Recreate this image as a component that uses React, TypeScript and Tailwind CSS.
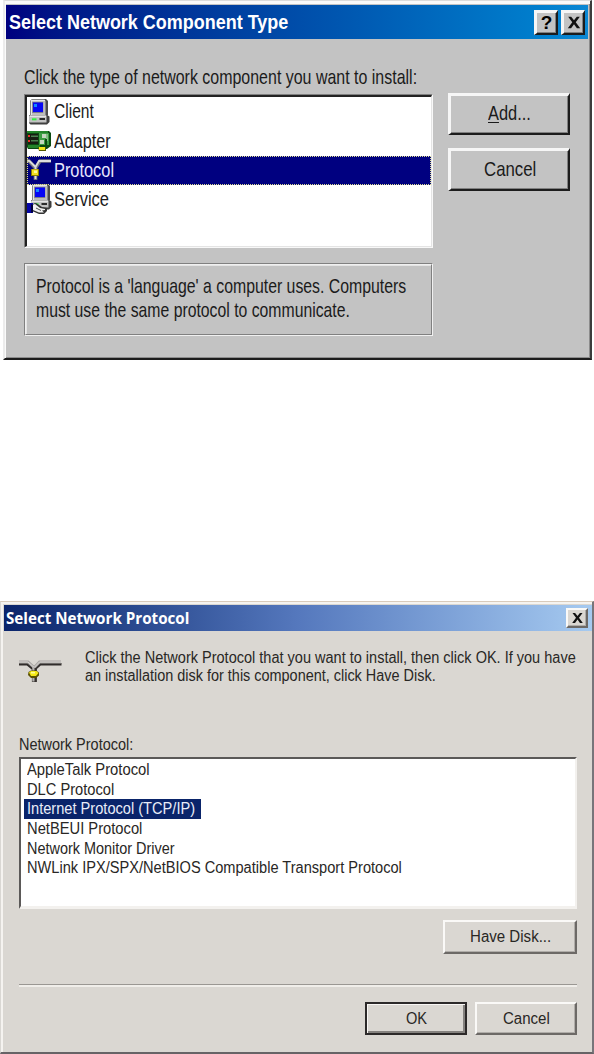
import { useLayoutEffect, useRef, useState } from 'react';
import type { ReactNode } from 'react';
import clsx from 'clsx';

/** Single line of text condensed or widened to a fixed width. */
function Line({ w, children, className }: { w: number; children: ReactNode; className?: string }) {
  const ref = useRef<HTMLSpanElement>(null);
  const [scale, setScale] = useState(1);
  useLayoutEffect(() => {
    if (ref.current) setScale(w / ref.current.offsetWidth);
  }, [w]);
  return (
    <div className={clsx('shrink-0 whitespace-nowrap', className)} style={{ width: w }}>
      <span ref={ref} className="inline-block origin-left" style={{ transform: `scaleX(${scale})` }}>
        {children}
      </span>
    </div>
  );
}

function CloseGlyph({ className }: { className: string }) {
  return (
    <svg viewBox="0 0 12 12" className={className}>
      <path d="M1 1H3.6L6 4L8.4 1H11L7.5 5.7L11.3 11H8.5L6 7.6L3.5 11H.7L4.5 5.7Z" fill="#111" />
    </svg>
  );
}

function Computer() {
  return (
    <>
      <path d="M1 2L3 0H17L19 2V16L17 18H1Z" fill="#4c4c4c" />
      <path d="M1.5 1.5L3 .5H15.5L16.5 2V16.5H1.5Z" fill="#bdbdbd" />
      <path d="M2 1H16V2H3V16H2Z" fill="#e6e6e6" />
      <path d="M3.2 3H14.2V14H3.2Z" fill="#7c7c88" />
      <path d="M4 3.5H14V13H4Z" fill="#0606f4" />
      <path d="M5 5H8V8H5Z" fill="#1488ff" />
      <path d="M0 16H18L20.5 17.5V23L18 25.5H1.5L0 24Z" fill="#3f3f3f" />
      <path d="M0 16.5H17.5V23.5H0Z" fill="#c2c2c2" />
      <path d="M1 16.5H17V18H1Z" fill="#e4e4e4" />
      <path d="M3 19.3H7.5V21.3H3Z" fill="#30f040" />
      <path d="M10.5 19H16V21H10.5Z" fill="#2b2b2b" />
    </>
  );
}

function ClientIcon() {
  return (
    <svg viewBox="0 0 25 29" className="h-[29px] w-[25px]">
      <g transform="translate(2 2)"><Computer /></g>
    </svg>
  );
}

function AdapterIcon() {
  return (
    <svg viewBox="0 0 25 29" className="h-[29px] w-[25px]">
      <path d="M0 4H22L24 6V19L20 22H1L0 20Z" fill="#0b4a12" />
      <path d="M0 4H21V6H0ZM1 18H13V21H1Z" fill="#23842a" />
      <path d="M1 7H11V17H1Z" fill="#161d12" />
      <path d="M1 8H3V10H1ZM1 13H3V15H1Z" fill="#e8332b" />
      <path d="M4 8.5H11V10H4ZM4 13H11V14.5H4Z" fill="#4c8050" />
      <path d="M12 6H22V18H12Z" fill="#3b9c42" />
      <path d="M15 7H19V11H15ZM13 13H17V17H13Z" fill="#c4d6c0" />
      <path d="M19 7H21V14H19Z" fill="#86bb86" />
      <path d="M18 12H20V18H18Z" fill="#0b4a12" />
      <path d="M11 20H19V24H12Z" fill="#555a00" />
      <path d="M12 20H18V23H12Z" fill="#f0e51b" />
    </svg>
  );
}

function ProtocolIcon() {
  return (
    <svg viewBox="0 0 25 29" className="h-[29px] w-[25px]">
      <path d="M0 5H2L8.5 12L13 5H24M8.5 11V24" fill="none" stroke="#77777c" strokeWidth="3.6" />
      <path d="M0 4.5L2.5 5L8.5 11L12 5H24M8.5 11V23" fill="none" stroke="#dedede" strokeWidth="1.8" />
      <path d="M4 13H12V20H4Z" fill="#8c7c00" />
      <path d="M5 13.5H11V19H5Z" fill="#f4df20" />
      <path d="M7 14.5H10V17H7Z" fill="#fff8a0" />
    </svg>
  );
}

function ServiceIcon() {
  return (
    <svg viewBox="0 0 25 31" className="h-[31px] w-[25px]">
      <g transform="translate(4 0)"><Computer /></g>
      <path d="M5 20L9 19L15 23L20 24V27L17 30H12L5 27Z" fill="#333" />
      <path d="M5 21L8 20L13 24L18 25V26L15 26.5L17 28.5H12L6 26Z" fill="#f2f2f2" />
      <path d="M9 24L14 26.5" stroke="#555" />
      <path d="M0 19H6V29H0Z" fill="#0505a5" />
      <path d="M4 20L6 21V28L4 29Z" fill="#000038" />
    </svg>
  );
}

function CableIcon() {
  return (
    <svg viewBox="0 0 44 27" className="h-[27px] w-[44px]">
      <path d="M1 6.2H9L16 12L22.5 6.2H43.5" fill="none" stroke="#302c2b" strokeWidth="2.4" />
      <path d="M1 4H10L16.2 9.5L21.5 4H43" fill="none" stroke="#a7a4a2" strokeWidth="2.8" />
      <path d="M1 4H10L16.2 9.5L21.5 4H43" fill="none" stroke="#dcd9d6" strokeWidth="1" />
      <path d="M16.4 10V24" stroke="#37322f" strokeWidth="5" />
      <path d="M15.4 9V23.5" stroke="#b5b2b0" strokeWidth="2.2" />
      <path d="M10.5 14L13 12.5H18L21 14.5V17.5L18 20H13L10 17Z" fill="#5c5100" />
      <path d="M11 14.5L13 13H18.5L20.5 15L18 18H13Z" fill="#f5e914" />
      <path d="M13 14H17V15.5H13Z" fill="#fffb9b" />
    </svg>
  );
}

const btn98 =
  'flex items-center justify-center border-t-[3px] border-l-[3px] border-r-2 border-b-2 border-t-[#f6f6f6] border-l-[#f6f6f6] border-r-[#1c1c1c] border-b-[#1c1c1c] bg-[#c3c3c3] shadow-[inset_-1px_-1px_0_#808080]';
const btn2k =
  'flex items-center justify-center border-t-2 border-l-2 border-r-2 border-b-2 border-t-[#faf9f7] border-l-[#faf9f7] border-r-[#6c6966] border-b-[#6c6966] bg-[#dad7d2] shadow-[inset_-1px_-1px_0_#b0ada9]';

const components = [
  { name: 'Client', w: 40, icon: <ClientIcon /> },
  { name: 'Adapter', w: 57, icon: <AdapterIcon /> },
  { name: 'Protocol', w: 60, icon: <ProtocolIcon />, selected: true },
  { name: 'Service', w: 55, icon: <ServiceIcon /> },
];

const protocols = [
  { name: 'AppleTalk Protocol', w: 123 },
  { name: 'DLC Protocol', w: 87 },
  { name: 'Internet Protocol (TCP/IP)', w: 168, selected: true },
  { name: 'NetBEUI Protocol', w: 115 },
  { name: 'Network Monitor Driver', w: 148 },
  { name: 'NWLink IPX/SPX/NetBIOS Compatible Transport Protocol', w: 375 },
];

function ComponentTypeDialog() {
  return (
    <section className="ml-[3px] h-[360px] w-[589px] border-t border-r-2 border-b-2 border-l-2 border-t-[#dcdcdc] border-r-[#3c3c3c] border-b-[#1c1c1c] border-l-[#ececec] bg-[#c3c3c3] text-[21px] leading-6 text-[#1b1b1b] shadow-[inset_1px_3px_0_#fafafa,inset_-1px_-1px_0_#8c8c8c]">
      <header className="mt-1 ml-px flex h-[34px] w-[582px] items-center bg-linear-to-r from-[#00007f] to-[#0c88d4] pr-[3px] pl-[3px] font-bold text-white">
        <Line w={279}>Select Network Component Type</Line>
        <div className="ml-auto flex gap-[3px]">
          <button className={clsx(btn98, 'h-[25px] w-6 text-[19px] text-black')}>?</button>
          <button className={clsx(btn98, 'h-[25px] w-6')}><CloseGlyph className="h-[15px] w-[14px] shrink-0" /></button>
        </div>
      </header>
      <div className="flex gap-[15px] pl-[19px]">
        <div className="w-[409px] pt-[26px]">
          <Line w={393}>Click the type of network component you want to install:</Line>
          <div className="mt-[5px] h-[154px] border border-t-[#808080] border-r-[#f8f8f8] border-b-[#f8f8f8] border-l-[#808080]">
            <div className="h-full border-t-2 border-r border-b border-l-2 border-t-[#222] border-r-[#e4e4e4] border-b-[#e4e4e4] border-l-[#222] bg-white">
              {components.map((c) => (
                <div
                  key={c.name}
                  className={clsx(
                    'flex h-[29.4px] items-center',
                    c.selected && 'bg-[#000080] text-[#e8e8ff] outline-1 -outline-offset-1 outline-dotted outline-[#dede90]',
                  )}
                >
                  {c.icon}
                  <Line w={c.w} className="-mt-px ml-[2px]">{c.name}</Line>
                </div>
              ))}
            </div>
          </div>
          <div className="mt-[15px] h-[73px] border border-t-[#808080] border-r-[#f0f0f0] border-b-[#f0f0f0] border-l-[#808080]">
            <div className="h-full border border-t-[#f0f0f0] border-r-[#808080] border-b-[#808080] border-l-[#f0f0f0] pt-[9px] pl-[10px] shadow-[inset_1px_1px_0_#e4e4e4]">
              <Line w={370}>Protocol is a 'language' a computer uses. Computers</Line>
              <Line w={314}>must use the same protocol to communicate.</Line>
            </div>
          </div>
        </div>
        <div className="flex w-[122px] flex-col gap-[13px] pt-[54px]">
          <button className={clsx(btn98, 'h-[42px] pb-[3px]')}>
            <Line w={43}><span className="underline decoration-1 underline-offset-2">A</span>dd...</Line>
          </button>
          <button className={clsx(btn98, 'h-[43px] pb-[3px]')}><Line w={52}>Cancel</Line></button>
        </div>
      </div>
    </section>
  );
}

function NetworkProtocolDialog() {
  return (
    <section className="mt-[241px] h-[453px] w-[594px] border-t border-r-2 border-b-2 border-l border-t-[#d9cbbb] border-r-[#77757a] border-b-[#666366] border-l-[#d9d7d3] bg-[#dad7d2] text-base leading-5 text-[#292725] shadow-[inset_2px_2px_0_#f5f3f0]">
      <header className="mt-[3px] ml-[3px] flex h-[26px] w-[588px] items-center bg-linear-to-r from-[#0a246a] via-[#5578bd] to-[#a6caf0] pr-1 pl-[2px]">
        <Line w={183} className="font-['Open_Sans'] font-bold text-white">Select Network Protocol</Line>
        <button className={clsx(btn2k, 'ml-auto h-[20px] w-[22px]')}><CloseGlyph className="h-[12px] w-[13px] shrink-0" /></button>
      </header>
      <div className="flex h-[104px] pt-[17px] pl-[17px]">
        <div className="w-[67px] pt-[10px]"><CableIcon /></div>
        <div>
          <Line w={491} className="h-[18px]">Click the Network Protocol that you want to install, then click OK. If you have</Line>
          <Line w={351} className="h-[18px]">an installation disk for this component, click Have Disk.</Line>
        </div>
      </div>
      <div className="pl-[18px]">
        <Line w={114} className="h-[22px]">Network Protocol:</Line>
        <div className="h-[152px] w-[558px] border-t-2 border-r-2 border-b-[3px] border-l-2 border-t-[#5b5958] border-r-[#f3f1ee] border-b-[#f3f1ee] border-l-[#5b5958] bg-white pt-px pl-[3px]">
          {protocols.map((p) => (
            <div
              key={p.name}
              className={clsx('flex h-[19.7px] w-fit items-center pr-[6px] pl-[3px]', p.selected && 'bg-[#0a246a] text-[#e9ecf8]')}
            >
              <Line w={p.w}>{p.name}</Line>
            </div>
          ))}
        </div>
        <div className="mt-[11px] flex w-[558px] justify-end">
          <button className={clsx(btn2k, 'h-[34px] w-[134px]')}><Line w={81}>Have Disk...</Line></button>
        </div>
        <div className="mt-[30px] h-[3px] w-[558px] border-t border-b-2 border-t-[#9a9793] border-b-[#f0eeea]" />
        <div className="mt-[15px] flex w-[558px] justify-end gap-2">
          <button className="flex h-[33px] w-[102px] items-center justify-center border-2 border-[#2c2929] bg-[#dad7d2] shadow-[inset_1px_1px_0_#f8f6f4,inset_-2px_-2px_0_#85827f]">
            <Line w={21}>OK</Line>
          </button>
          <button className={clsx(btn2k, 'h-[33px] w-[102px]')}><Line w={47}>Cancel</Line></button>
        </div>
      </div>
    </section>
  );
}

export default function App() {
  return (
    <main className="h-[1054px] w-[594px] overflow-hidden bg-white font-['Liberation_Sans',sans-serif]">
      <ComponentTypeDialog />
      <NetworkProtocolDialog />
    </main>
  );
}
